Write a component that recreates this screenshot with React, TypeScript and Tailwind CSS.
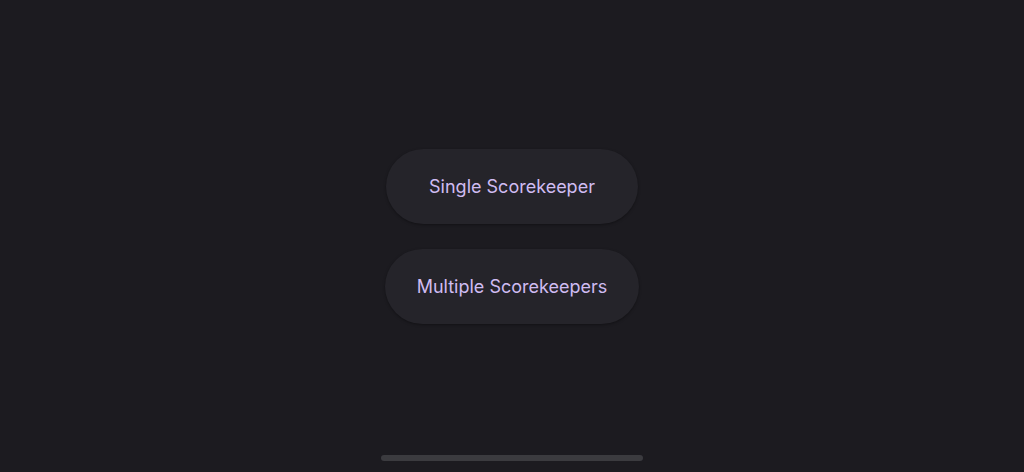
// Scorekeeper mode picker — two pill buttons centred on a dark screen
const MODES = [
  { label: 'Single Scorekeeper', width: 'w-[252px]' },
  { label: 'Multiple Scorekeepers', width: 'w-[254px]' },
];

export default function App() {
  return (
    <div
      className="relative h-[472px] w-full bg-[#1c1b20] flex items-center justify-center"
      style={{ fontFamily: 'Inter, "Noto Sans", sans-serif' }}
    >
      <div className="flex flex-col items-center gap-[25px]">
        {MODES.map((m) => (
          <button
            key={m.label}
            className={`${m.width} h-[75px] rounded-full bg-[#25242a] text-[18px] text-[#d0bcf2] shadow-[0_1px_3px_rgba(0,0,0,0.35)]`}
          >
            {m.label}
          </button>
        ))}
      </div>

      {/* home indicator */}
      <div className="absolute bottom-[11px] left-1/2 -translate-x-1/2 h-[6px] w-[262px] rounded-full bg-[#3b3b3f]" />
    </div>
  );
}
